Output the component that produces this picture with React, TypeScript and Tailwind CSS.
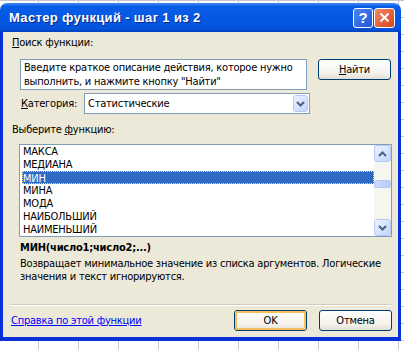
import type { ReactElement, ReactNode } from 'react';

const functions = ['МАКСА', 'МЕДИАНА', 'МИН', 'МИНА', 'МОДА', 'НАИБОЛЬШИЙ', 'НАИМЕНЬШИЙ'];

function Chevron({ up }: { up?: boolean }): ReactElement {
	return (
		<svg width="9" height="6" viewBox="0 0 9 6">
			<path
				d={up ? 'M1 5 L4.5 1.5 L8 5' : 'M1 1 L4.5 4.5 L8 1'}
				fill="none"
				stroke="#4D6185"
				strokeWidth="2"
			/>
		</svg>
	);
}

function ScrollButton({ up, className }: { up?: boolean; className?: string }): ReactElement {
	return (
		<div
			className={`flex items-center justify-center rounded-[3px] border border-[#B7CAF5] bg-[linear-gradient(135deg,#EEF3FF,#C3D4FB)] ${className ?? ''}`}
		>
			<Chevron up={up} />
		</div>
	);
}

function XpButton({
	children,
	focus,
	className,
}: {
	children: ReactNode;
	focus?: boolean;
	className?: string;
}): ReactElement {
	return (
		<div
			className={`h-[21px] w-[73px] rounded-[3px] border border-[#003C74] bg-[linear-gradient(to_bottom,#FFFFFF,#F3F2EC_70%,#E2DFD3)] ${className ?? ''}`}
		>
			<div
				className={`flex h-full w-full items-center justify-center rounded-[2px] ${focus ? 'border-2 border-[#F5C15B]' : ''}`}
			>
				{children}
			</div>
		</div>
	);
}

export default function App(): ReactElement {
	return (
		<div className="h-[350px] w-[404px] overflow-hidden bg-white pt-[3px] [background-image:linear-gradient(to_right,#C8C8C8_1px,transparent_1px),linear-gradient(to_bottom,#C8C8C8_1px,transparent_1px)] [background-position:38px_0px] [background-size:40px_17px]">
			<div className="flex h-[338px] w-[401px] flex-col text-[11px] leading-[14px] tracking-[-0.22px] text-black [font-family:'DejaVu_Sans_Condensed','Liberation_Sans',sans-serif]">
				{/* title bar */}
				<div className="flex h-[29px] items-center rounded-t-[7px] bg-[linear-gradient(to_bottom,#3C8CF6_0%,#0A5DE6_12%,#0458E3_50%,#0454DC_88%,#0241BC_100%)] pl-[9px] pr-[6px]">
					<div className="flex-1 text-[13px] font-bold tracking-[0.35px] text-white [font-family:'Liberation_Sans',sans-serif] [text-shadow:1px_1px_0_#0A2A8A]">
						Мастер функций - шаг 1 из 2
					</div>
					<div className="flex gap-[1px]">
						<div className="flex h-[20px] w-[20px] items-center justify-center rounded-[3px] border border-white bg-[linear-gradient(135deg,#4C86F0,#1F56D8)] text-[15px] font-bold text-white [font-family:'Liberation_Sans',sans-serif]">
							?
						</div>
						<div className="flex h-[20px] w-[21px] items-center justify-center rounded-[3px] border border-white bg-[linear-gradient(135deg,#F08A6A,#D9431C)]">
							<svg width="11" height="11" viewBox="0 0 11 11">
								<path d="M1.5 1.5 L9.5 9.5 M9.5 1.5 L1.5 9.5" stroke="white" strokeWidth="2" />
							</svg>
						</div>
					</div>
				</div>

				{/* body */}
				<div className="flex flex-1 flex-col border-x-[3px] border-b-[4px] border-[#0831D9] bg-[#ECE9D8]">
					<div className="ml-[9px] mt-[4px]">
						<span className="underline">П</span>оиск функции:
					</div>

					<div className="mt-[9px] flex">
						<div className="ml-[17px] h-[31px] w-[287px] border border-[#7F9DB9] bg-white px-[3px] pt-[1px]">
							Введите краткое описание действия, которое нужно выполнить, и нажмите кнопку "Найти"
						</div>
						<XpButton className="ml-[11px]">
							<span>
								<span className="underline">Н</span>айти
							</span>
						</XpButton>
					</div>

					<div className="mt-[3px] flex items-center">
						<div className="ml-[18px] w-[63px]">
							<span className="underline">К</span>атегория:
						</div>
						<div className="flex h-[21px] w-[226px] items-center border border-[#7F9DB9] bg-white pl-[3px]">
							<div className="flex-1">Статистические</div>
							<ScrollButton className="mr-[1px] h-[17px] w-[15px]" />
						</div>
					</div>

					<div className="ml-[9px] mt-[9px]">
						Выберите <span className="underline">ф</span>ункцию:
					</div>

					<div className="ml-[16px] mt-[7px] flex h-[93px] w-[373px] border border-[#7F9DB9] bg-white">
						<div className="flex-1 pl-[2px] leading-[13px]">
							{functions.map((f) => (
								<div
									key={f}
									className={
										f === 'МИН'
											? 'h-[13px] border border-dotted border-[#F5E08A] bg-[#316AC5] text-white'
											: 'h-[13px] pl-[1px]'
									}
								>
									{f}
								</div>
							))}
						</div>
						<div className="flex w-[17px] flex-col bg-[#F6F6F1]">
							<ScrollButton up className="h-[17px]" />
							<div className="flex-1">
								<div className="mt-[18px] h-[8px] rounded-[2px] border border-[#B7CAF5] bg-[linear-gradient(to_right,#CADAFD,#BBCDF8)]" />
							</div>
							<ScrollButton className="h-[17px]" />
						</div>
					</div>

					<div className="ml-[17px] mt-[4px] font-bold">МИН(число1;число2;...)</div>
					<div className="ml-[17px] mt-[2px] leading-[13px]">
						Возвращает минимальное значение из списка аргументов. Логические
						<br />
						значения и текст игнорируются.
					</div>

					<div className="ml-[7px] mt-[21px] w-[382px] border-b border-t border-b-white border-t-[#D0CDBE]" />

					<div className="mt-[4px] flex items-center">
						<div className="ml-[8px] w-[223px] text-[#0000FF] underline">Справка по этой функции</div>
						<XpButton focus className="w-[72px]">
							OK
						</XpButton>
						<XpButton className="ml-[12px]">Отмена</XpButton>
					</div>
				</div>
			</div>
		</div>
	);
}
